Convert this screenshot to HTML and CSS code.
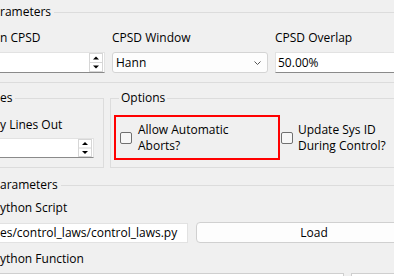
FILE: index.html
```html
<!DOCTYPE html>
<html lang="en">
<head>
  <meta charset="UTF-8">
  <title>Control Settings</title>
  <link rel="stylesheet" href="styles.css">
</head>
<body>
  <div class="window">
    <section class="group group-top">
      <span class="group-title">rameters</span>
      <div class="row-3">
        <div class="field">
          <label>n CPSD</label>
          <div class="spin clipped">
            <span class="spin-text"></span>
            <svg class="spin-arrows" width="14" height="19" viewBox="0 0 14 19">
              <rect x="0.5" y="0.5" width="13" height="18" fill="#fff" stroke="#d6d6d6"/>
              <line x1="0" y1="9.5" x2="14" y2="9.5" stroke="#d6d6d6"/>
              <path d="M4 6.5h6L7 3.5z" fill="#000"/>
              <path d="M4 12.5h6l-3 3z" fill="#000"/>
            </svg>
          </div>
        </div>
        <div class="field">
          <label>CPSD Window</label>
          <div class="combo">
            <span>Hann</span>
            <svg width="7" height="4" viewBox="0 0 7 4"><polyline points="0.5,0.5 3.5,3.5 6.5,0.5" fill="none" stroke="#555"/></svg>
          </div>
        </div>
        <div class="field">
          <label>CPSD Overlap</label>
          <div class="line-edit">50.00%</div>
        </div>
      </div>
    </section>

    <div class="row-boxes">
      <section class="box box-lines">
        <span class="group-title">es</span>
        <label>y Lines Out</label>
        <div class="spin clipped">
          <span class="spin-text"></span>
          <svg class="spin-arrows" width="14" height="18" viewBox="0 0 14 18">
            <rect x="0.5" y="0.5" width="13" height="17" fill="#fff" stroke="#d6d6d6"/>
            <line x1="0" y1="9" x2="14" y2="9" stroke="#d6d6d6"/>
            <path d="M4 6h6L7 3z" fill="#000"/>
            <path d="M4 12h6l-3 3z" fill="#000"/>
          </svg>
        </div>
      </section>
      <section class="box box-options">
        <span class="group-title">Options</span>
        <div class="options-row">
          <div class="check highlight">
            <span class="check-box"></span>
            <span>Allow Automatic<br>Aborts?</span>
          </div>
          <div class="check">
            <span class="check-box"></span>
            <span>Update Sys ID<br>During Control?</span>
          </div>
        </div>
      </section>
    </div>

    <section class="group group-python">
      <span class="group-title">arameters</span>
      <label>ython Script</label>
      <div class="script-row">
        <div class="line-edit clipped path">es/control_laws/control_laws.py</div>
        <button type="button" class="load-btn">Load</button>
      </div>
      <label class="second">ython Function</label>
      <div class="bottom-row">
        <div class="line-edit clipped"></div>
        <div class="line-edit"></div>
      </div>
    </section>
  </div>
</body>
</html>
```

FILE: styles.css
```css
html, body {
  margin: 0;
  overflow: hidden;
}
body {
  background: #f0f0f0;
  font-family: "Open Sans", "Noto Sans", sans-serif;
  font-size: 12px;
  color: #000;
  width: 394px;
  height: 276px;
}
.window {
  width: 432px;
}
label {
  display: block;
  line-height: 16px;
  white-space: nowrap;
}
.group {
  position: relative;
  border-top: 1px solid #dcdcdc;
  border-bottom: 1px solid #dcdcdc;
}
.group-title {
  position: absolute;
  top: -9px;
  left: 0;
  line-height: 16px;
  padding-right: 3px;
  background: #f0f0f0;
  white-space: nowrap;
}
.group-top {
  margin-top: 12px;
  padding: 17px 0 9px;
}
.row-3 {
  display: grid;
  grid-template-columns: 105px 156px 1fr;
  column-gap: 7px;
}
.field label {
  margin-bottom: 6px;
}
.line-edit, .spin, .combo {
  box-sizing: border-box;
  height: 21px;
  background: #fff;
  border: 1px solid #e2e2e2;
  border-bottom-color: #8a8a8a;
  line-height: 19px;
  padding-left: 2px;
  white-space: nowrap;
  overflow: hidden;
}
.clipped {
  border-left: none;
}
.spin {
  display: flex;
  align-items: center;
  padding: 0 1px 0 0;
}
.spin-text {
  flex: 1;
}
.combo {
  display: flex;
  align-items: center;
  justify-content: space-between;
  border: 1px solid #d4d4d4;
  border-radius: 3px;
  background: #fdfdfd;
  padding: 0 6px 0 3px;
}
.combo svg {
  margin-top: 1px;
}
.row-boxes {
  display: flex;
  gap: 6px;
  margin-top: 15px;
}
.box {
  position: relative;
  box-sizing: border-box;
  border: 1px solid #dcdcdc;
}
.box-lines {
  width: 114px;
  margin-left: -10px;
  padding: 18px 9px 8px 0;
}
.box-lines .group-title {
  left: 9px;
}
.box-lines label {
  padding-left: 9px;
  margin-bottom: 5px;
}
.box-lines .spin {
  height: 20px;
}
.box-options {
  flex: 1;
  padding: 16px 0 7px 3px;
}
.box-options .group-title {
  left: 8px;
  padding: 0 2px;
}
.options-row {
  display: flex;
  align-items: center;
}
.check {
  display: flex;
  align-items: center;
  line-height: 16px;
  white-space: nowrap;
}
.check-box {
  box-sizing: border-box;
  width: 12px;
  height: 12px;
  border: 1px solid #707070;
  border-radius: 2px;
  background: #f7f7f7;
  margin-right: 5px;
}
.highlight {
  box-sizing: border-box;
  width: 166px;
  height: 45px;
  border: 2px solid #f00;
  padding-left: 4px;
}
.highlight .check-box {
  margin-right: 6px;
}
.highlight + .check {
  margin-left: 1px;
}
.group-python {
  margin-top: 17px;
  padding-top: 14px;
  border-bottom: none;
}
.group-python label {
  margin-bottom: 6px;
}
.group-python label.second {
  margin-top: 8px;
}
.script-row {
  display: grid;
  grid-template-columns: 188px 1fr;
  column-gap: 8px;
  align-items: start;
}
.path {
  margin-top: 1px;
  height: 20px;
  padding-left: 0;
  border-bottom-color: #e2e2e2;
  line-height: 18px;
}
.load-btn {
  height: 21px;
  background: #fdfdfd;
  border: 1px solid #d0d0d0;
  border-radius: 4px;
  font: inherit;
  color: #000;
  padding: 0;
}
.bottom-row {
  display: grid;
  grid-template-columns: 344px 1fr;
  column-gap: 7px;
}
.bottom-row .line-edit {
  border-bottom: none;
  border-color: #cfcfcf;
}
```
